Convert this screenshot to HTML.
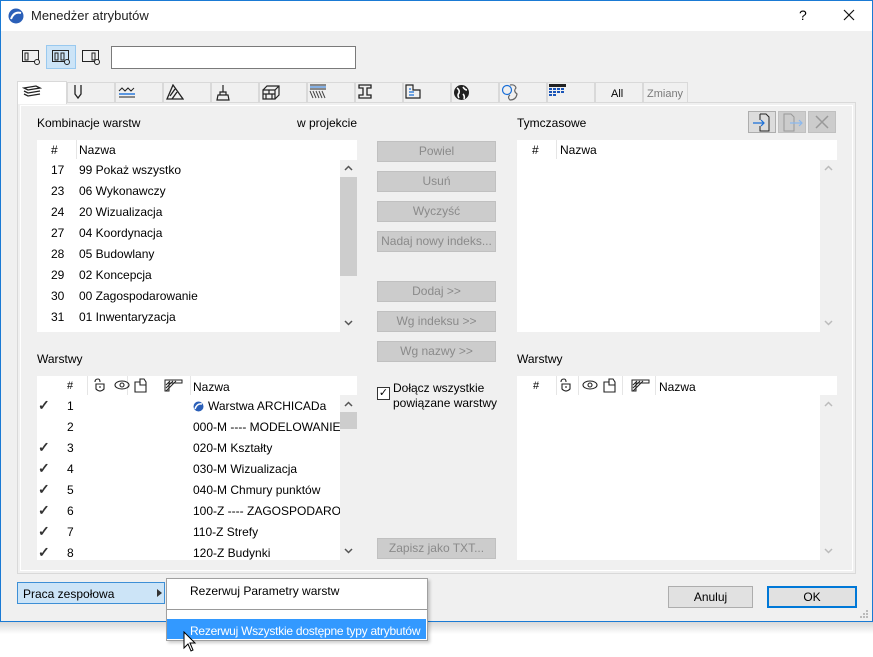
<!DOCTYPE html>
<html><head><meta charset="utf-8">
<style>
*{box-sizing:border-box;margin:0;padding:0}
body{width:873px;height:657px;background:#fff;font-family:"Liberation Sans",sans-serif;font-size:12px;color:#000;position:relative;overflow:hidden}
.a{position:absolute}
.win{left:0;top:0;width:873px;height:622px;background:#f0f0f0;border:1px solid #1a7ad4}
.title{left:1px;top:1px;width:871px;height:30px;background:#fff}
.list{background:#fff}
.btn{background:#cccccc;border:1px solid #c0c0c0;color:#8a8a8a;text-align:center;line-height:19px;font-size:12px}
.tab{top:82px;height:21px;border:1px solid #d9d9d9;border-bottom:none;background:#f0f0f0}
.row{position:absolute;font-size:12px;white-space:nowrap}
.chk{font-size:14px;font-weight:bold;color:#333}
.hdrsep{position:absolute;width:1px;background:#e5e5e5}
</style></head><body>
<div class="a" style="left:0;top:622px;width:873px;height:12px;background:linear-gradient(#d8d8d8,#fff)"></div>
<div class="a win"></div>
<div class="a title"></div>
<svg class="a" style="left:8px;top:8px" width="16" height="16"><circle cx="8" cy="8" r="7.5" fill="#2a5fb8"/><path d="M3 11 Q6 3 13 5" stroke="#fff" stroke-width="2" fill="none"/></svg>
<div class="a" style="left:31px;top:8px;font-size:13px;color:#222">Menedżer atrybutów</div>
<div class="a" style="left:799px;top:7px;font-size:14px">?</div>
<svg class="a" style="left:843px;top:9px" width="12" height="12"><path d="M1 1 L11 11 M11 1 L1 11" stroke="#111" stroke-width="1.2"/></svg>

<!-- toolbar -->
<svg class="a" style="left:22px;top:50px" width="20" height="16"><rect x="0.5" y="0.5" width="16" height="11" fill="none" stroke="#222"/><rect x="3" y="3" width="3" height="7" fill="none" stroke="#222"/><circle cx="15" cy="12" r="2.5" fill="#f0f0f0" stroke="#222"/></svg>
<div class="a" style="left:46px;top:45px;width:30px;height:24px;background:#cce4f7;border:1px solid #99c9ef"></div>
<svg class="a" style="left:52px;top:50px" width="20" height="16"><rect x="0.5" y="0.5" width="16" height="11" fill="none" stroke="#222"/><rect x="3" y="3" width="3" height="7" fill="none" stroke="#222"/><rect x="9" y="3" width="3" height="7" fill="none" stroke="#222"/><circle cx="15" cy="12" r="2.5" fill="#cce4f7" stroke="#222"/></svg>
<svg class="a" style="left:82px;top:50px" width="20" height="16"><rect x="0.5" y="0.5" width="16" height="11" fill="none" stroke="#222"/><rect x="10" y="3" width="3" height="7" fill="none" stroke="#222"/><circle cx="15" cy="12" r="2.5" fill="#f0f0f0" stroke="#222"/></svg>
<div class="a" style="left:111px;top:46px;width:245px;height:23px;background:#fff;border:1px solid #7a7a7a"></div>

<!-- tabs -->
<div class="a tab" style="left:67px;width:48px"></div>
<div class="a tab" style="left:115px;width:48px"></div>
<div class="a tab" style="left:163px;width:48px"></div>
<div class="a tab" style="left:211px;width:48px"></div>
<div class="a tab" style="left:259px;width:48px"></div>
<div class="a tab" style="left:307px;width:48px"></div>
<div class="a tab" style="left:355px;width:48px"></div>
<div class="a tab" style="left:403px;width:48px"></div>
<div class="a tab" style="left:451px;width:48px"></div>
<div class="a tab" style="left:499px;width:48px"></div>
<div class="a tab" style="left:547px;width:48px"></div>
<div class="a tab" style="left:595px;width:48px"></div>
<div class="a tab" style="left:643px;width:45px"></div>
<div class="a" style="left:17px;top:102px;width:839px;height:472px;border:1px solid #d9d9d9;background:#f0f0f0"></div>
<div class="a" style="left:17px;top:81px;width:50px;height:23px;background:#fff;border:1px solid #d9d9d9;border-bottom:none"></div>
<div class="a" style="left:20px;top:105px;width:833px;height:466px;border:1px solid #fff"></div>
<!-- tab icons -->
<svg class="a" style="left:22px;top:84px" width="20" height="14" fill="none" stroke="#222" stroke-width="1.3"><path d="M2 4 L14 2 L18 4 L6 6 Z"/><path d="M2 7 L6 9 L18 7"/><path d="M2 10 L6 12 L18 10"/></svg>
<svg class="a" style="left:73px;top:84px" width="10" height="16" fill="none" stroke="#222" stroke-width="1.3"><path d="M2 1 V10 L5 14 L8 10 V1"/></svg>
<svg class="a" style="left:118px;top:86px" width="18" height="12" fill="none"><path d="M1 5 L4 2 L7 5 L10 2 L13 5 L16 2" stroke="#222"/><path d="M1 8 H17" stroke="#1a6fd8" stroke-width="1.4"/><path d="M1 11 H17" stroke="#222"/></svg>
<svg class="a" style="left:166px;top:84px" width="18" height="16" fill="none" stroke="#222" stroke-width="1.3"><path d="M1 15 L7 1 L17 15 Z M4 12 L9 5 M6 15 L11 8"/></svg>
<svg class="a" style="left:215px;top:84px" width="16" height="17" fill="none" stroke="#222" stroke-width="1.2"><path d="M8 1 V8 M5 8 H11 V11 H5 Z M3 11 H13 L14 16 H2 Z"/></svg>
<svg class="a" style="left:262px;top:85px" width="18" height="15" fill="none" stroke="#222" stroke-width="1.2"><path d="M1 5 H13 V14 H1 Z M1 5 L5 1 H17 V10 L13 14 M13 5 L17 1 M1 9 H13 M7 5 V9 M4 9 V14 M10 9 V14"/></svg>
<svg class="a" style="left:309px;top:84px" width="18" height="15"><path d="M1 1 H17" stroke="#222"/><path d="M1 3 H17" stroke="#1a6fd8"/><path d="M1 5 H17" stroke="#222"/><path d="M1 7 L4 14 M4 7 L7 14 M7 7 L10 14 M10 7 L13 14 M13 7 L16 14" stroke="#444"/></svg>
<svg class="a" style="left:357px;top:84px" width="16" height="16" fill="none" stroke="#222" stroke-width="1.3"><path d="M2 1 H14 V4 H10 V11 H14 V14 H2 V11 H6 V4 H2 Z"/></svg>
<svg class="a" style="left:405px;top:84px" width="17" height="16" fill="none" stroke="#222" stroke-width="1.2"><path d="M1 1 H8 V6 H15 V14 H1 Z"/><path d="M4 5 H6 M4 8 H9 M4 11 H9" stroke="#1a6fd8"/></svg>
<svg class="a" style="left:453px;top:84px" width="17" height="17"><circle cx="8.5" cy="8.5" r="7.5" fill="#222"/><path d="M4 4 Q7 6 6 9 Q4 11 6 14 M10 3 Q12 6 14 6 M10 10 Q12 12 11 15" stroke="#fff" stroke-width="1.6" fill="none"/></svg>
<svg class="a" style="left:501px;top:83px" width="18" height="19" fill="none" stroke-width="1.2"><circle cx="6" cy="7" r="4.5" stroke="#1a6fd8"/><path d="M9 2 Q14 1 15 5 Q12 8 16 11 Q15 17 9 17 Q6 14 9 12" stroke="#666"/></svg>
<svg class="a" style="left:549px;top:84px" width="18" height="14"><rect x="0" y="0" width="17" height="3" fill="#222"/><g fill="#1a55b8"><rect x="0" y="4" width="3" height="2"/><rect x="4" y="4" width="3" height="2"/><rect x="8" y="4" width="3" height="2"/><rect x="12" y="4" width="3" height="2"/><rect x="0" y="7" width="3" height="2"/><rect x="4" y="7" width="3" height="2"/><rect x="8" y="7" width="3" height="2"/><rect x="12" y="7" width="3" height="2"/><rect x="0" y="10" width="3" height="2"/><rect x="4" y="10" width="3" height="2"/></g></svg>
<div class="a" style="left:611px;top:88px;font-size:11px">All</div>
<div class="a" style="left:647px;top:88px;font-size:11px;color:#7a7a7a">Zmiany</div>

<!-- upper left -->
<div class="a" style="left:37px;top:116px">Kombinacje warstw</div>
<div class="a" style="left:297px;top:116px">w projekcie</div>
<div class="a list" style="left:37px;top:140px;width:320px;height:192px"></div>
<div class="hdrsep" style="left:76px;top:140px;height:19px"></div>
<div class="a" style="left:340px;top:160px;width:17px;height:172px;background:#f0f0f0"></div>
<div class="a" style="left:340px;top:177px;width:17px;height:99px;background:#cdcdcd"></div>
<svg class="a" style="left:344px;top:165px" width="9" height="6"><path d="M1 5 L4.5 1.5 L8 5" stroke="#555" stroke-width="1.5" fill="none"/></svg>
<svg class="a" style="left:344px;top:320px" width="9" height="6"><path d="M1 1 L4.5 4.5 L8 1" stroke="#555" stroke-width="1.5" fill="none"/></svg>
<div class="row" style="left:51px;top:143px">#</div>
<div class="row" style="left:79px;top:143px">Nazwa</div>
<div class="row" style="left:51px;top:163px">17</div><div class="row" style="left:79px;top:163px">99 Pokaż wszystko</div>
<div class="row" style="left:51px;top:184px">23</div><div class="row" style="left:79px;top:184px">06 Wykonawczy</div>
<div class="row" style="left:51px;top:205px">24</div><div class="row" style="left:79px;top:205px">20 Wizualizacja</div>
<div class="row" style="left:51px;top:226px">27</div><div class="row" style="left:79px;top:226px">04 Koordynacja</div>
<div class="row" style="left:51px;top:247px">28</div><div class="row" style="left:79px;top:247px">05 Budowlany</div>
<div class="row" style="left:51px;top:268px">29</div><div class="row" style="left:79px;top:268px">02 Koncepcja</div>
<div class="row" style="left:51px;top:289px">30</div><div class="row" style="left:79px;top:289px">00 Zagospodarowanie</div>
<div class="row" style="left:51px;top:310px">31</div><div class="row" style="left:79px;top:310px">01 Inwentaryzacja</div>

<!-- middle buttons -->
<div class="a btn" style="left:377px;top:141px;width:119px;height:21px">Powiel</div>
<div class="a btn" style="left:377px;top:171px;width:119px;height:21px">Usuń</div>
<div class="a btn" style="left:377px;top:201px;width:119px;height:21px">Wyczyść</div>
<div class="a btn" style="left:377px;top:231px;width:119px;height:21px">Nadaj nowy indeks...</div>
<div class="a btn" style="left:377px;top:281px;width:119px;height:21px">Dodaj &gt;&gt;</div>
<div class="a btn" style="left:377px;top:311px;width:119px;height:21px">Wg indeksu &gt;&gt;</div>
<div class="a btn" style="left:377px;top:341px;width:119px;height:21px">Wg nazwy &gt;&gt;</div>
<div class="a btn" style="left:377px;top:538px;width:119px;height:21px">Zapisz jako TXT...</div>

<!-- upper right -->
<div class="a" style="left:517px;top:116px">Tymczasowe</div>
<div class="a" style="left:748px;top:111px;width:28px;height:22px;background:#dcdcdc;border:1px solid #adadad"></div>
<svg class="a" style="left:752px;top:113px" width="20" height="19" fill="none"><path d="M8 1 H14 L17 4 V18 H8 V13 M8 7 V1" stroke="#222"/><path d="M1 10 H12 M9 7 L12 10 L9 13" stroke="#1a6fd8" stroke-width="1.2"/></svg>
<div class="a" style="left:778px;top:111px;width:28px;height:22px;background:#cccccc;border:1px solid #c0c0c0"></div>
<svg class="a" style="left:782px;top:113px" width="22" height="19" fill="none"><path d="M2 1 H9 L12 4 V18 H2 Z" stroke="#999"/><path d="M8 10 H20 M17 7 L20 10 L17 13" stroke="#8ab8ee" stroke-width="1.2"/></svg>
<div class="a" style="left:808px;top:111px;width:28px;height:22px;background:#cccccc;border:1px solid #c0c0c0"></div>
<svg class="a" style="left:815px;top:115px" width="14" height="14"><path d="M1 1 L13 13 M13 1 L1 13" stroke="#999" stroke-width="1.5"/></svg>
<div class="a list" style="left:517px;top:140px;width:320px;height:192px"></div>
<div class="hdrsep" style="left:556px;top:140px;height:19px"></div>
<div class="a" style="left:820px;top:160px;width:17px;height:172px;background:#f0f0f0"></div>
<svg class="a" style="left:824px;top:165px" width="9" height="6"><path d="M1 5 L4.5 1.5 L8 5" stroke="#bbb" stroke-width="1.5" fill="none"/></svg>
<svg class="a" style="left:824px;top:320px" width="9" height="6"><path d="M1 1 L4.5 4.5 L8 1" stroke="#bbb" stroke-width="1.5" fill="none"/></svg>
<div class="row" style="left:532px;top:143px">#</div>
<div class="row" style="left:560px;top:143px">Nazwa</div>

<!-- lower left -->
<div class="a" style="left:37px;top:352px">Warstwy</div>
<div class="a list" style="left:37px;top:376px;width:320px;height:184px"></div>
<div class="a" style="left:340px;top:395px;width:17px;height:165px;background:#f0f0f0"></div>
<div class="a" style="left:340px;top:412px;width:17px;height:17px;background:#cdcdcd"></div>
<svg class="a" style="left:344px;top:401px" width="9" height="6"><path d="M1 5 L4.5 1.5 L8 5" stroke="#555" stroke-width="1.5" fill="none"/></svg>
<svg class="a" style="left:344px;top:548px" width="9" height="6"><path d="M1 1 L4.5 4.5 L8 1" stroke="#555" stroke-width="1.5" fill="none"/></svg>
<div class="hdrsep" style="left:87px;top:376px;height:19px"></div>
<div class="hdrsep" style="left:127px;top:376px;height:19px"></div>
<div class="hdrsep" style="left:190px;top:376px;height:19px"></div>
<div class="row" style="left:67px;top:380px;font-size:11px">#</div>
<svg class="a" style="left:93px;top:378px" width="60" height="16" fill="none" stroke="#222" stroke-width="1.1"><path d="M2 4 Q2 1 5 1 Q7 1 7 4 M3 6 H11 V11 Q7 15 3 11 Z M7 8 V10"/><ellipse cx="29" cy="7" rx="7" ry="4"/><circle cx="29" cy="7" r="2"/><path d="M42 4 H47 V1 H51 L53 4 V14 H42 Z M47 4 V7 H53"/></svg>
<svg class="a" style="left:164px;top:379px" width="20" height="13" fill="none" stroke="#222"><path d="M1 1 H18 V4 H5 V12 H1 Z M2 6 L6 2 M2 9 L9 2 M2 12 L12 2"/></svg>
<div class="row" style="left:193px;top:380px">Nazwa</div>
<div class="row chk" style="left:38px;top:397px">✓</div><div class="row" style="left:67px;top:399px">1</div>
<svg class="a" style="left:193px;top:401px" width="11" height="11"><circle cx="5.5" cy="5.5" r="5" fill="#2a5fb8"/><path d="M2 8 Q4 2 9 3" stroke="#fff" stroke-width="1.5" fill="none"/></svg><div class="row" style="left:208px;top:399px">Warstwa ARCHICADa</div>
<div class="row" style="left:67px;top:420px">2</div><div class="row" style="left:193px;top:420px;width:147px;overflow:hidden">000-M ---- MODELOWANIE ----</div>
<div class="row chk" style="left:38px;top:439px">✓</div><div class="row" style="left:67px;top:441px">3</div><div class="row" style="left:193px;top:441px">020-M Kształty</div>
<div class="row chk" style="left:38px;top:460px">✓</div><div class="row" style="left:67px;top:462px">4</div><div class="row" style="left:193px;top:462px">030-M Wizualizacja</div>
<div class="row chk" style="left:38px;top:481px">✓</div><div class="row" style="left:67px;top:483px">5</div><div class="row" style="left:193px;top:483px">040-M Chmury punktów</div>
<div class="row chk" style="left:38px;top:502px">✓</div><div class="row" style="left:67px;top:504px">6</div><div class="row" style="left:193px;top:504px;width:147px;overflow:hidden">100-Z ---- ZAGOSPODAROWANIE</div>
<div class="row chk" style="left:38px;top:523px">✓</div><div class="row" style="left:67px;top:525px">7</div><div class="row" style="left:193px;top:525px">110-Z Strefy</div>
<div class="row chk" style="left:38px;top:544px">✓</div><div class="row" style="left:67px;top:546px">8</div><div class="row" style="left:193px;top:546px">120-Z Budynki</div>

<!-- checkbox -->
<div class="a" style="left:377px;top:387px;width:13px;height:13px;border:1px solid #333;background:#fff;font-size:11px;line-height:11px;text-align:center">✓</div>
<div class="a" style="left:393px;top:381px;line-height:15px">Dołącz wszystkie<br>powiązane warstwy</div>

<!-- lower right -->
<div class="a" style="left:517px;top:352px">Warstwy</div>
<div class="a list" style="left:517px;top:376px;width:320px;height:184px"></div>
<div class="a" style="left:820px;top:395px;width:17px;height:165px;background:#f0f0f0"></div>
<svg class="a" style="left:824px;top:401px" width="9" height="6"><path d="M1 5 L4.5 1.5 L8 5" stroke="#bbb" stroke-width="1.5" fill="none"/></svg>
<svg class="a" style="left:824px;top:548px" width="9" height="6"><path d="M1 1 L4.5 4.5 L8 1" stroke="#bbb" stroke-width="1.5" fill="none"/></svg>
<div class="hdrsep" style="left:556px;top:376px;height:19px"></div>
<div class="hdrsep" style="left:578px;top:376px;height:19px"></div>
<div class="hdrsep" style="left:622px;top:376px;height:19px"></div>
<div class="hdrsep" style="left:655px;top:376px;height:19px"></div>
<div class="row" style="left:533px;top:380px;font-size:11px">#</div>
<svg class="a" style="left:559px;top:378px" width="60" height="16" fill="none" stroke="#222" stroke-width="1.1"><path d="M2 4 Q2 1 5 1 Q7 1 7 4 M3 6 H11 V11 Q7 15 3 11 Z M7 8 V10"/><ellipse cx="31" cy="7" rx="7" ry="4"/><circle cx="31" cy="7" r="2"/><path d="M45 4 H50 V1 H54 L56 4 V14 H45 Z M50 4 V7 H56"/></svg>
<svg class="a" style="left:631px;top:379px" width="20" height="13" fill="none" stroke="#222"><path d="M1 1 H18 V4 H5 V12 H1 Z M2 6 L6 2 M2 9 L9 2 M2 12 L12 2"/></svg>
<div class="row" style="left:659px;top:380px">Nazwa</div>

<!-- bottom -->
<div class="a" style="left:17px;top:582px;width:148px;height:22px;background:#cce4f7;border:1px solid #3d8fd6"></div>
<div class="a" style="left:23px;top:587px">Praca zespołowa</div>
<svg class="a" style="left:157px;top:589px" width="5" height="8"><path d="M0 0 L5 4 L0 8 Z" fill="#333"/></svg>
<div class="a" style="left:668px;top:586px;width:85px;height:22px;background:#e1e1e1;border:1px solid #adadad;text-align:center;line-height:20px">Anuluj</div>
<div class="a" style="left:767px;top:586px;width:90px;height:22px;background:#e1e1e1;border:2px solid #0078d7;text-align:center;line-height:18px">OK</div>
<svg class="a" style="left:860px;top:610px" width="10" height="10" fill="#bbb"><rect x="6" y="0" width="2" height="2"/><rect x="3" y="3" width="2" height="2"/><rect x="6" y="3" width="2" height="2"/><rect x="0" y="6" width="2" height="2"/><rect x="3" y="6" width="2" height="2"/><rect x="6" y="6" width="2" height="2"/></svg>
<div class="a" style="left:166px;top:578px;width:262px;height:63px;background:#fff;border:1px solid #a0a0a0;box-shadow:2px 2px 3px rgba(0,0,0,.2)"></div>
<div class="a" style="left:190px;top:584px">Rezerwuj Parametry warstw</div>
<div class="a" style="left:167px;top:609px;width:260px;height:1px;background:#999"></div>
<div class="a" style="left:167px;top:619px;width:259px;height:20px;background:#3399ff"></div>
<div class="a" style="left:190px;top:624px;color:#fff;letter-spacing:-0.25px;white-space:nowrap">Rezerwuj Wszystkie dostępne typy atrybutów</div>
<svg class="a" style="left:183px;top:631px" width="14" height="22"><path d="M1 1 V17 L5 13 L8 20 L10 19 L7 12 L12 12 Z" fill="#fff" stroke="#000"/></svg>
</body></html>
